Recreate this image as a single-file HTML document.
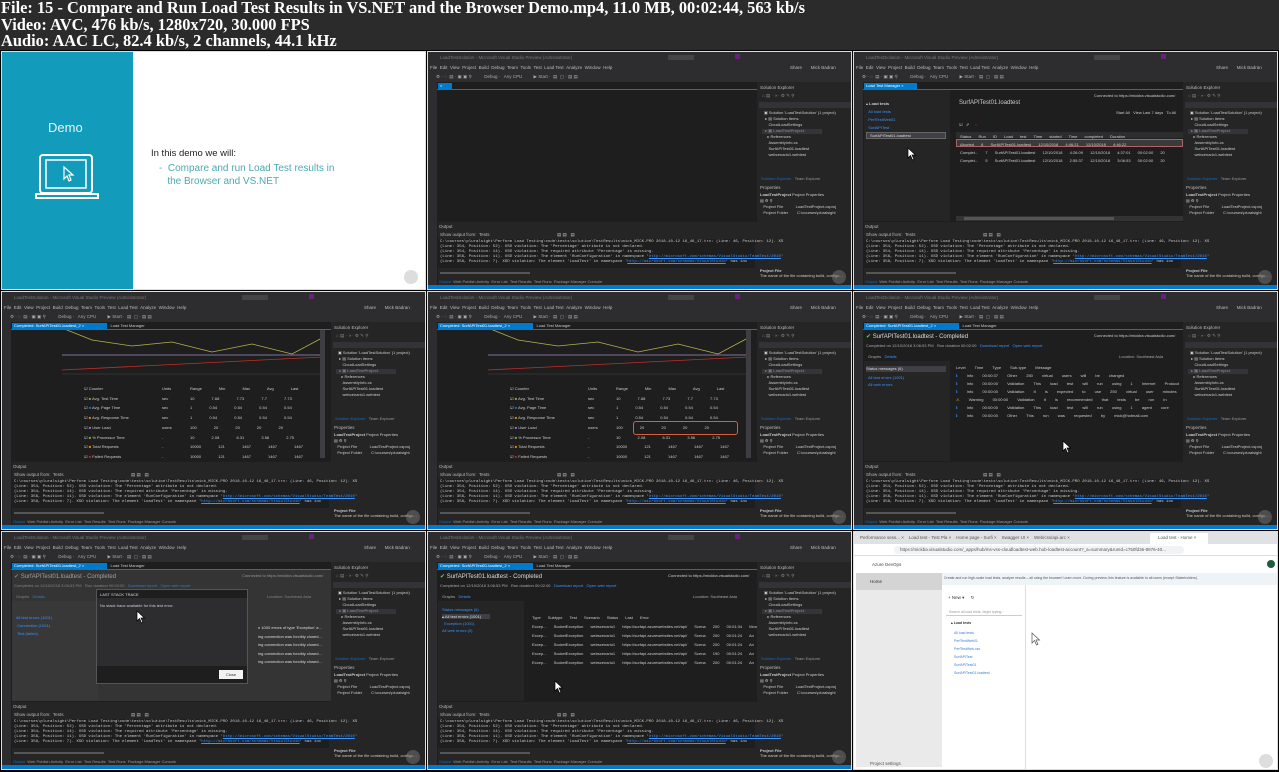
<!DOCTYPE html>
<html><head><meta charset="utf-8"><style>
*{margin:0;padding:0;box-sizing:border-box}
body{width:1279px;height:772px;background:#000;overflow:hidden;position:relative;font-family:"Liberation Sans",sans-serif}
#hdr{position:absolute;left:0;top:0;width:1279px;height:50px;background:#2b2b2b;color:#fff;font-family:"Liberation Serif",serif;font-weight:bold;font-size:16.4px;line-height:16.5px;padding:0 0 0 1px}
.t{position:absolute;width:423px;height:237px;overflow:hidden;background:#1e1e1e;outline:1px solid #ddd}
.a{position:absolute;white-space:nowrap}
.s{font-size:4.5px;color:#bbb}
.m{font-family:"Liberation Mono",monospace;font-size:4px;color:#ccc}
</style></head><body>
<div id="hdr">File: 15 - Compare and Run Load Test Results in VS.NET and the Browser Demo.mp4, 11.0 MB, 00:02:44, 563 kb/s<br>Video: AVC, 476 kb/s, 1280x720, 30.000 FPS<br>Audio: AAC LC, 82.4 kb/s, 2 channels, 44.1 kHz</div>

<div class="t" style="left:2px;top:52px;background:#fff">
 <div class="a" style="left:0;top:0;width:131px;height:237px;background:#139bbb"></div>
 <div class="a" style="left:46px;top:68px;font-size:13px;color:#e6f6fa">Demo</div>
 <svg class="a" style="left:33px;top:101px" width="66" height="50" viewBox="0 0 66 50"><rect x="5" y="2" width="52" height="38" rx="3" fill="none" stroke="#fff" stroke-width="2"/><rect x="11" y="7" width="40" height="28" fill="none" stroke="#fff" stroke-width="1.5"/><path d="M1 41H63V45H1Z" fill="none" stroke="#fff" stroke-width="2"/><path d="M29 14L29 26L32 23L34 28L36 27L34 22L38 22Z" fill="none" stroke="#fff" stroke-width="1.2"/></svg>
 <div class="a" style="left:149px;top:96px;font-size:9.5px;color:#222">In this demo we will:</div>
 <div class="a" style="left:157px;top:111px;font-size:10px;color:#4da9b3;line-height:12.5px">- &nbsp;Compare and run Load Test results in<br>&nbsp;&nbsp;&nbsp;the Browser and VS.NET</div>
 <div class="a" style="left:402px;top:218px;width:14px;height:14px;border-radius:7px;background:#ddd"></div>
</div>

<div class="t" id="t2" style="left:428px;top:52px"></div>
<div class="t" id="t3" style="left:854px;top:52px"></div>
<div class="t" id="t4" style="left:2px;top:292px"></div>
<div class="t" id="t5" style="left:428px;top:292px"></div>
<div class="t" id="t6" style="left:854px;top:292px"></div>
<div class="t" id="t7" style="left:2px;top:532px"></div>
<div class="t" id="t8" style="left:428px;top:532px"></div>

<div class="t" style="left:854px;top:532px;background:#fff">
 <div class="a" style="left:0;top:0;width:423px;height:12px;background:#dfe1e5"></div>
 <div class="a s" style="left:6px;top:3px;color:#555">Performance sess... ×&nbsp;&nbsp;&nbsp; Load test - Test Pla ×&nbsp;&nbsp;&nbsp; Home page - Surfi ×&nbsp;&nbsp;&nbsp; Swagger UI ×&nbsp;&nbsp;&nbsp; Web/css/api.arc ×</div>
 <div class="a" style="left:296px;top:1px;width:58px;height:11px;background:#fff"></div>
 <div class="a s" style="left:304px;top:3px;color:#555">Load test - Home ×</div>
 <div class="a" style="left:0;top:12px;width:423px;height:12px;background:#fff;border-bottom:1px solid #ddd"></div>
 <div class="a" style="left:40px;top:14px;width:290px;height:8px;background:#f1f3f4;border-radius:4px"></div>
 <div class="a s" style="left:46px;top:15px;color:#555">https://mickba.visualstudio.com/_apps/hub/ms-vss-cloudloadtest-web.hub-loadtest-account?_a=summary&amp;runId=c750fd36-8976-40...</div>
 <div class="a s" style="left:18px;top:30px;color:#444">Azure DevOps</div>
 <div class="a" style="left:413px;top:28px;width:8px;height:8px;border-radius:4px;background:#1d5c3c"></div>
 <div class="a" style="left:2px;top:41px;width:86px;height:194px;background:#eaeaea"></div>
 <div class="a" style="left:2px;top:41px;width:86px;height:17px;background:#d4d4d4"></div>
 <div class="a s" style="left:16px;top:47px;color:#333">Home</div>
 <div class="a s" style="left:16px;top:229px;color:#555">Project settings</div>
 <div class="a" style="left:88px;top:41px;width:335px;height:12px;background:#eef3f8"></div>
 <div class="a" style="font-size:3.5px;color:#555;left:90px;top:44px">Create and run high-scale load tests, analyze results – all using the browser! Learn more. During preview, this feature is available to all users (except Stakeholders).</div>
 <div class="a" style="left:171px;top:53px;width:1px;height:184px;background:#ddd"></div>
 <div class="a s" style="left:94px;top:63px;color:#333">+ New ▾ &nbsp;&nbsp;&nbsp; ↻</div>
 <div class="a" style="left:92px;top:76px;width:76px;height:8px;border-bottom:1px solid #ccc"></div>
 <div class="a" style="font-size:3.5px;color:#999;left:95px;top:78px">Search all load tests, begin typing...</div>
 <div class="a" style="font-size:3.5px;color:#333;left:97px;top:89px;font-weight:bold">▴ Load tests</div>
 <div class="a" style="font-size:3.5px;color:#3a7dd6;left:100px;top:97px;line-height:8px">All load tests<br>PerfTestWeb01<br>PerfTestWeb.csv<br>SurfAPITest<br>SurfAPITest01<br>SurfAPITest01.loadtest</div>
 <svg class="a" style="left:177px;top:100px" width="10" height="14"><path d="M1 1V11L3.5 8.5L5.5 13L7 12.3L5 8H8.5Z" fill="#fff" stroke="#555" stroke-width=".7"/></svg>
 <div class="a" style="left:405px;top:222px;width:14px;height:14px;border-radius:7px;background:#ddd"></div>
</div>

<script>
function vs(id,doc,tab){
var out=`
<div class="a" style="left:0;top:0;width:423px;height:30px;background:#2d2d30"></div>
<div class="a s" style="left:12px;top:3px;color:#777">LoadTestSolution - Microsoft Visual Studio Preview (Administrator)</div>
<div class="a" style="left:240px;top:3px;width:26px;height:5px;background:#444"></div>
<div class="a" style="left:307px;top:2px;width:5px;height:5px;background:#68217a"></div>
<div class="a s" style="left:2px;top:13px">File &nbsp;Edit &nbsp;View &nbsp;Project &nbsp;Build &nbsp;Debug &nbsp;Team &nbsp;Tools &nbsp;Test &nbsp;Load Test &nbsp;Analyze &nbsp;Window &nbsp;Help</div>
<div class="a s" style="left:362px;top:13px">Share &nbsp;&nbsp;&nbsp;&nbsp;&nbsp; Mick Badran</div>
<div class="a s" style="left:8px;top:22px;color:#aaa">⚙ · ◌ &nbsp;▤ · ▣ ▣ ⚲ &nbsp;&nbsp;&nbsp;&nbsp;&nbsp;&nbsp;&nbsp;&nbsp; Debug · &nbsp; Any CPU &nbsp;&nbsp;&nbsp;&nbsp;&nbsp;&nbsp;&nbsp; ▶ Start · &nbsp;▤ &nbsp;▢ · ▤ ▤</div>
<div class="a" style="left:0;top:30px;width:9px;height:203px;background:#2d2d30"></div>
<div class="a" style="left:9px;top:37px;width:320px;height:1px;background:#007acc"></div>
${tab}
<div class="a" style="left:10px;top:38px;width:319px;height:131px;background:#1e1e1e">${doc}</div>
<div class="a" style="left:329px;top:30px;width:94px;height:203px;background:#252526"></div>
<div class="a s" style="left:332px;top:33px">Solution Explorer</div>
<div class="a s" style="left:334px;top:41px;color:#888">⌂ ▤ · ◑ · ⚙ ✎ ⚲</div>
<div class="a" style="left:331px;top:50px;width:92px;height:6px;background:#333337"></div>
<div class="a" style="font-size:4px;color:#ccc;left:336px;top:58px;line-height:6px">▣ Solution 'LoadTestSolution' (1 project)<br>&nbsp;▸ ▤ Solution Items<br>&nbsp;&nbsp;&nbsp;&nbsp;CloudLoadSettings<br><b>&nbsp;▸ ▣ LoadTestProject</b><br>&nbsp;&nbsp;&nbsp;▸ References<br>&nbsp;&nbsp;&nbsp;&nbsp;AssemblyInfo.cs<br>&nbsp;&nbsp;&nbsp;&nbsp;SurfAPITest01.loadtest<br>&nbsp;&nbsp;&nbsp;&nbsp;webcenario1.webtest</div>
<div class="a" style="left:334px;top:77px;width:60px;height:5px;background:#3f3f46;opacity:.6"></div>
<div class="a" style="font-size:4px;color:#999;left:333px;top:124px"><span style="color:#0e70c0">Solution Explorer</span> &nbsp; Team Explorer</div>
<div class="a s" style="left:332px;top:133px">Properties</div>
<div class="a" style="font-size:4px;color:#ccc;left:332px;top:140px;line-height:6px"><b>LoadTestProject</b> Project Properties<br>▤ ⚙ ⚲<br>&nbsp;&nbsp;&nbsp;Project File &nbsp;&nbsp;&nbsp;&nbsp;&nbsp;&nbsp;&nbsp;&nbsp;&nbsp; LoadTestProject.csproj<br>&nbsp;&nbsp;&nbsp;Project Folder &nbsp;&nbsp;&nbsp;&nbsp;&nbsp;&nbsp; C:\\courses\\pluralsight</div>
<div class="a" style="font-size:4px;color:#ccc;left:332px;top:216px;line-height:5px"><b>Project File</b><br>The name of the file containing build, configu...</div>
<div class="a" style="left:10px;top:170px;width:319px;height:63px;background:#252526"></div>
<div class="a s" style="left:11px;top:172px">Output</div>
<div class="a s" style="left:12px;top:180px">Show output from: &nbsp;Tests &nbsp;&nbsp;&nbsp;&nbsp;&nbsp;&nbsp;&nbsp;&nbsp;&nbsp;&nbsp;&nbsp;&nbsp;&nbsp;&nbsp;&nbsp;&nbsp;&nbsp;&nbsp;&nbsp;&nbsp;&nbsp;&nbsp;&nbsp;&nbsp;&nbsp;&nbsp;&nbsp;&nbsp;&nbsp;&nbsp;&nbsp;&nbsp;&nbsp;&nbsp;&nbsp;&nbsp;&nbsp;&nbsp;&nbsp;&nbsp;&nbsp;&nbsp;&nbsp;&nbsp;&nbsp;&nbsp;&nbsp;&nbsp;&nbsp;&nbsp;&nbsp;&nbsp; ▤ ▤ &nbsp; ▤</div>
<div class="a" style="left:10px;top:187px;width:317px;height:29px;background:#1e1e1e"></div>
<div class="a m" style="left:12px;top:188px;line-height:5px">C:\\courses\\pluralsight\\Perform Load Testing\\code\\tests\\solution\\TestResults\\mick_MICK-PRO 2018-10-12 16_46_17.trx: (Line: 46, Position: 12). XS<br>(Line: 354, Position: 52). XSD violation: The 'Percentage' attribute is not declared.<br>(Line: 354, Position: 14). XSD violation: The required attribute 'Percentage' is missing.<br>(Line: 356, Position: 11). XSD violation: The element 'RunConfiguration' in namespace '<span style="color:#3794ff;text-decoration:underline">http://microsoft.com/schemas/VisualStudio/TeamTest/2010</span>'<br>(Line: 358, Position: 7). XSD violation: The element 'LoadTest' in namespace '<span style="color:#3794ff;text-decoration:underline">http://microsoft.com/schemas/VisualStudio</span>' has inc</div>
<div class="a" style="left:12px;top:220px;width:90px;height:2px;background:#555"></div>
<div class="a" style="font-size:4px;color:#999;left:11px;top:227px"><span style="color:#0e70c0">Output</span> &nbsp;Web Publish Activity &nbsp;Error List &nbsp;Test Results &nbsp;Test Runs &nbsp;Package Manager Console</div>
<div class="a" style="left:0;top:233px;width:423px;height:4px;background:#007acc"></div>
<div class="a" style="left:404px;top:218px;width:14px;height:14px;border-radius:7px;background:#777;opacity:.5"></div>`;
document.getElementById(id).innerHTML=out;}
function tb(t1,t2){return `<div class="a" style="left:10px;top:31px;width:${t1.length*2.3+14}px;height:6px;background:#007acc;font-size:4px;color:#fff;padding-left:2px">${t1} ×</div>`+(t2?`<div class="a" style="left:${t1.length*2.3+28}px;top:31px;font-size:4px;color:#ccc">${t2}</div>`:'');}
var table=(hl)=>`
<svg class="a" style="left:0;top:0" width="319" height="50"><rect width="319" height="50" fill="#1e1e1e"/><line x1="50" y1="25" x2="310" y2="25" stroke="#a68fc9" stroke-width="0.8"/><polyline points="50,-2 80,10 120,16 160,12 200,22 240,14 280,24 310,8" fill="none" stroke="#b5b34d" stroke-width="0.8"/><polyline points="50,40 310,27" stroke="#c0302c" stroke-width="0.8"/><line x1="50" y1="44" x2="310" y2="44" stroke="#333"/></svg>
<div class="a" style="font-size:4px;color:#ccc;left:72px;top:54px;line-height:9.7px">☑ Counter<br>☑ <span style="color:#8a3">■</span> Avg. Test Time<br>☑ <span style="color:#07c">■</span> Avg. Page Time<br>☑ <span style="color:#e80">■</span> Avg. Response Time<br>☑ <span style="color:#97c">■</span> User Load<br>☑ <span style="color:#8a3">■</span> % Processor Time<br>☑ <span style="color:#e80">■</span> Total Requests<br>☑ <span style="color:#b22">■</span> Failed Requests</div>
<div class="a" style="font-size:4px;color:#ccc;left:150px;top:54px;line-height:9.7px">Units<br>sec<br>sec<br>sec<br>users<br>-<br>-<br>-</div>
<div class="a" style="font-size:4px;color:#ccc;left:178px;top:54px;line-height:9.7px;word-spacing:16px">Range Min Max Avg Last<br>10 7.68 7.73 7.7 7.73<br>1 0.54 0.54 0.54 0.54<br>1 0.54 0.54 0.54 0.54<br>100 20 20 20 20<br>10 2.08 6.31 3.56 2.75<br>10000 121 1467 1467 1467<br>10000 121 1467 1467 1467</div>
<div class="a" style="left:308px;top:0;width:5px;height:128px;background:#3e3e42"></div>`+(hl?'<div class="a" style="left:195px;top:91px;width:105px;height:14px;border:1.3px solid #d2603a;border-radius:3px"></div>':'');
vs('t2','',tb('')+'<svg class="a" style="left:243px;top:38px" width="10" height="14"><path d="M1 1V11L3.5 8.5L5.5 13L7 12.3L5 8H8.5Z" fill="#fff" stroke="#000" stroke-width=".7"/></svg>');
vs('t3',`
<div class="a" style="left:0;top:0;width:86px;height:131px;background:#252526"></div>
<div class="a" style="font-size:4px;color:#ccc;left:2px;top:10px;line-height:8px">▴ <b>Load tests</b><br><span style="color:#3794ff">&nbsp;&nbsp;All load tests<br>&nbsp;&nbsp;PerfTestWeb01<br>&nbsp;&nbsp;SurfAPITest</span></div>
<div class="a" style="left:2px;top:42px;width:80px;height:7px;border:1px solid #666;background:#3f3f46;font-size:4px;color:#ddd;padding-left:3px">SurfAPITest01.loadtest</div>
<svg class="a" style="left:43px;top:57px" width="10" height="14"><path d="M1 1V11L3.5 8.5L5.5 13L7 12.3L5 8H8.5Z" fill="#fff" stroke="#000" stroke-width=".7"/></svg>
<div class="a" style="left:95px;top:10px;font-size:6px;color:#ccc">SurfAPITest01.loadtest</div>
<div class="a" style="font-size:4px;color:#ccc;left:230px;top:3px">Connected to https://mickba.visualstudio.com/</div>
<div class="a" style="font-size:4px;color:#ccc;left:252px;top:20px">Start All &nbsp; View Last 7 days &nbsp; To All</div>
<div class="a" style="font-size:4px;color:#ccc;left:95px;top:32px">☑ &nbsp; ⇗ &nbsp;&nbsp;&nbsp; <span style="color:#c33">○</span></div>
<div class="a" style="left:92px;top:42px;width:227px;height:6px;background:#2d2d30"></div>
<div class="a" style="left:92px;top:49px;width:227px;height:8px;border:1px solid #a66;background:#3a3a3d"></div>
<div class="a" style="font-size:4px;color:#ccc;left:96px;top:43px;line-height:8px;word-spacing:6px">Status Run ID Load test Time started Time completed Duration<br>Aborted 8 SurfAPITest01.loadtest 12/10/2018 4:46:21 12/10/2018 4:46:22<br>Complet... 7 SurfAPITest01.loadtest 12/10/2018 4:26:09 12/10/2018 4:37:01 00:02:00 20<br>Complet... 5 SurfAPITest01.loadtest 12/10/2018 2:55:37 12/10/2018 3:06:53 00:02:00 20</div>
<div class="a" style="left:92px;top:126px;width:227px;height:5px;background:#333"></div><div class="a" style="left:100px;top:127px;width:150px;height:3px;background:#555"></div>`,tb('Load Test Manager'));
vs('t4',table(false)+'<svg class="a" style="left:320px;top:70px" width="10" height="14"><path d="M1 1V11L3.5 8.5L5.5 13L7 12.3L5 8H8.5Z" fill="#fff" stroke="#000" stroke-width=".7"/></svg>',tb('Completed: SurfAPITest01.loadtest_2','Load Test Manager'));
vs('t5',table(true),tb('Completed: SurfAPITest01.loadtest_2','Load Test Manager'));
var res=`
<div class="a" style="left:2px;top:3px;font-size:6px;color:#ddd"><span style="color:#6c6">✔</span> SurfAPITest01.loadtest - Completed</div>
<div class="a" style="font-size:4px;color:#aaa;left:2px;top:13px">Completed on 12/10/2018 3:06:53 PM &nbsp; Run duration 00:02:00 &nbsp; <span style="color:#3794ff">Download report &nbsp; Open web report</span></div>
<div class="a" style="font-size:4px;color:#ccc;left:230px;top:3px">Connected to https://mickba.visualstudio.com/</div>
<div class="a" style="font-size:4px;color:#aaa;left:4px;top:24px">Graphs &nbsp;&nbsp;<span style="color:#3794ff">Details</span></div>
<div class="a" style="font-size:4px;color:#aaa;left:255px;top:24px">Location: Southeast Asia</div>
<div class="a" style="left:0;top:31px;width:86px;height:100px;background:#252526"></div>`;
vs('t6',res+`<div class="a" style="left:2px;top:36px;width:80px;height:6px;background:#3f3f46;font-size:4px;color:#ddd">Status messages (6)</div>
<div class="a" style="font-size:4px;color:#3794ff;left:4px;top:44px;line-height:7px">All test errors (1001)<br>All web errors</div>
<div class="a" style="font-size:4px;color:#ccc;left:92px;top:34px;line-height:8px;word-spacing:8px">Level Time Type Sub-type Message<br><span style="color:#3794ff">ℹ</span> Info 00:00:37 Other 250 virtual users will be changed<br><span style="color:#3794ff">ℹ</span> Info 00:00:00 Validation This load test will run using 1 Internet Protocol<br><span style="color:#3794ff">ℹ</span> Info 00:00:00 Validation It is expected to use 250 virtual user minutes<br><span style="color:#eb4">⚠</span> Warning 00:00:00 Validation It is recommended that tests be run in<br><span style="color:#3794ff">ℹ</span> Info 00:00:00 Validation This load test will run using 1 agent core<br><span style="color:#3794ff">ℹ</span> Info 00:00:00 Other This run was requested by mick@hotmail.com</div>
<svg class="a" style="left:198px;top:110px" width="10" height="14"><path d="M1 1V11L3.5 8.5L5.5 13L7 12.3L5 8H8.5Z" fill="#fff" stroke="#000" stroke-width=".7"/></svg>`,tb('Completed: SurfAPITest01.loadtest_2','Load Test Manager'));
vs('t7',res+`<div class="a" style="left:0;top:0;width:319px;height:131px;background:rgba(80,80,80,.45)"></div>
<div class="a" style="font-size:4px;color:#3794ff;left:4px;top:44px;line-height:8px">All test errors (1001)<br>&nbsp;Connection (1001)<br>&nbsp;Test (failed)</div>
<div class="a" style="font-size:4px;color:#ddd;left:246px;top:54px;line-height:8.6px">n 1000 errors of type 'Exception' a...<br>ing connection was forcibly closed...<br>ing connection was forcibly closed...<br>ing connection was forcibly closed...<br>ing connection was forcibly closed...</div>
<div class="a" style="left:84px;top:19px;width:152px;height:95px;background:#2d2d30;border:1px solid #555"></div>
<div class="a" style="left:85px;top:20px;width:150px;height:8px;background:#1e1e1e;font-size:4px;color:#ddd;padding:2px 3px">LAST STACK TRACE</div>
<div class="a" style="font-size:4px;color:#ccc;left:88px;top:33px">No stack trace available for this test error.</div>
<div class="a" style="left:85px;top:96px;width:150px;height:17px;background:#1e1e1e"></div>
<div class="a" style="left:207px;top:100px;width:24px;height:9px;background:#f2f2f2;font-size:4px;color:#333;text-align:center;line-height:9px">Close</div>
<svg class="a" style="left:124px;top:40px" width="10" height="14"><path d="M1 1V11L3.5 8.5L5.5 13L7 12.3L5 8H8.5Z" fill="#fff" stroke="#000" stroke-width=".7"/></svg>`,tb('Completed: SurfAPITest01.loadtest_2','Load Test Manager'));
vs('t8',res+`<div class="a" style="font-size:4px;color:#3794ff;left:4px;top:36px;line-height:7px">Status messages (6)<br><span style="background:#3f3f46;color:#ddd">▴ All test errors (1001)&nbsp;&nbsp;&nbsp;&nbsp;&nbsp;&nbsp;&nbsp;&nbsp;</span><br>&nbsp;&nbsp;Exception (1001)<br>All web errors (0)</div>
<div class="a" style="font-size:4px;color:#ccc;left:94px;top:43px;line-height:9px;word-spacing:6px">Type Subtype Test Scenario Status Last Error<br>Excep... SocketException webscenario1 https://surfapi.azurewebsites.net/api/ Scena 200 00:01:34 More than<br>Excep... SocketException webscenario1 https://surfapi.azurewebsites.net/api/ Scena 200 00:01:24 An exist<br>Excep... SocketException webscenario1 https://surfapi.azurewebsites.net/api/ Scena 200 00:01:24 An exist<br>Excep... SocketException webscenario1 https://surfapi.azurewebsites.net/api/ Scena 190 00:01:24 An exist<br>Excep... SocketException webscenario1 https://surfapi.azurewebsites.net/api/ Scena 200 00:01:24 An exist</div>
<svg class="a" style="left:116px;top:110px" width="10" height="14"><path d="M1 1V11L3.5 8.5L5.5 13L7 12.3L5 8H8.5Z" fill="#fff" stroke="#000" stroke-width=".7"/></svg>`,tb('Completed: SurfAPITest01.loadtest_2','Load Test Manager'));
</script>
</body></html>
